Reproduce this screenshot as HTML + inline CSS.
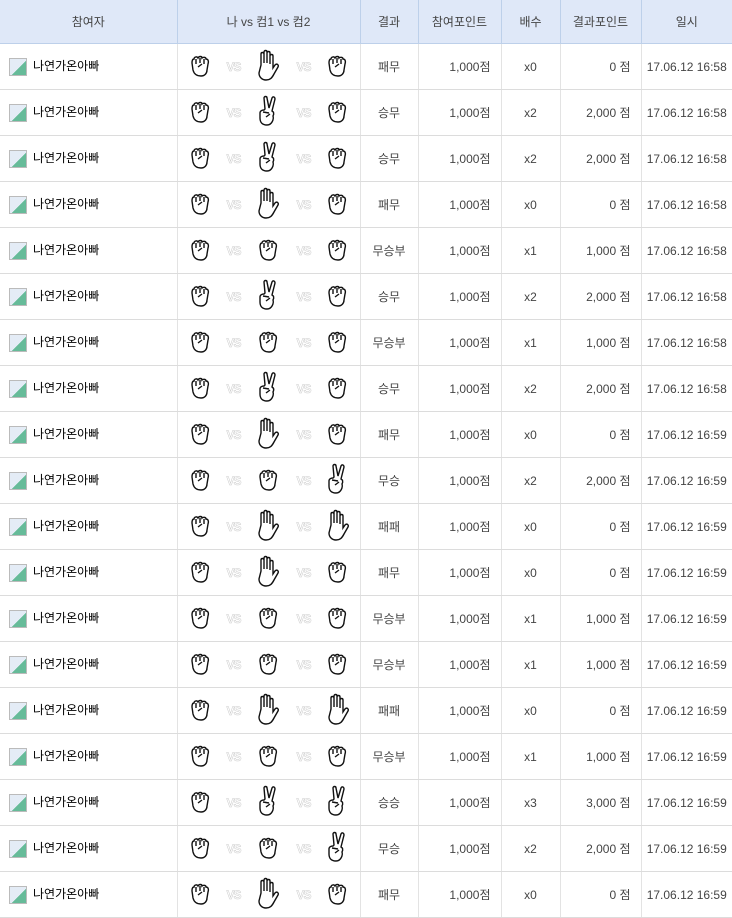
<!DOCTYPE html>
<html><head><meta charset="utf-8"><style>
body{margin:0;width:732px;height:918px;overflow:hidden;background:#fff;font-family:"Liberation Sans","Noto Sans CJK KR","NanumGothic",sans-serif;font-size:12px;color:#444}
table{border-collapse:collapse;table-layout:fixed;width:732px}
td,th{padding:0;text-align:center;border-right:1px solid #e3e3e3;border-bottom:1px solid #dcdcdc}
th{background:#dfe8f8;height:43px;font-weight:normal;color:#444;border-right:1px solid #bdd0ea;border-bottom:1px solid #bdd0ea}
td{height:45px}
td.n{text-align:left;padding-left:9px;color:#000}
td.r{text-align:right;padding-right:10px}
.img{display:inline-block;width:18px;height:18px;border:1px solid #bbb;vertical-align:middle;margin-right:6px;background:linear-gradient(135deg,#e4ecf6 55%,#6b9 55%);box-sizing:border-box}
.h{display:inline-flex;align-items:center;justify-content:space-between;width:160px;vertical-align:middle}
.vs{font-weight:bold;font-size:12px;-webkit-text-stroke:0.5px #ccc;color:#fff;letter-spacing:-1px}
</style></head><body>
<table>
<colgroup><col style="width:177px"><col style="width:183px"><col style="width:58px"><col style="width:83px"><col style="width:59px"><col style="width:81px"><col style="width:91px"></colgroup>
<thead><tr><th>참여자</th><th>나 vs 컴1 vs 컴2</th><th>결과</th><th>참여포인트</th><th>배수</th><th>결과포인트</th><th style="border-right:0">일시</th></tr></thead>
<tbody id="b"></tbody></table>
<script>
var R='<svg width="22" height="26" viewBox="0 0 22 26"><path d="M5 7c0-2 3-3 4-1 1-2 4-2 4 0 1-1 4-1 4 1 2 0 3 2 2 5l-1 6c0 3-2 6-6 6s-7-2-8-6L3 11c0-3 1-4 2-4zM7 7l0 5M11 6v5M15 7v5M9 15l4-3" fill="none" stroke="#111" stroke-width="1.4"/></svg>';
var P='<svg width="24" height="32" viewBox="0 0 24 32"><path d="M5 16V5c0-2 3-2 3 0v9V3c0-2 3-2 3 0v11V4c0-2 3-2 3 0v11V7c0-2 3-2 3 0v12l2-3c2-2 4 0 3 2l-4 7c-2 4-4 6-8 6s-7-3-7-7z" fill="none" stroke="#111" stroke-width="1.4"/></svg>';
var S='<svg width="22" height="32" viewBox="0 0 22 32"><path d="M8 14L7 3c0-2 3-2 3 0l2 10 3-10c1-2 3-1 3 1l-3 12c2 1 2 3 1 5 1 3-1 9-6 9s-7-3-7-7l0-5c0-2 2-3 4-3zM6 17l6 1M9 22l4-3" fill="none" stroke="#111" stroke-width="1.4"/></svg>';
var m={R:R,P:P,S:S};
var d=[["RPR","패무",0,58],["RSR","승무",2,58],["RSR","승무",2,58],["RPR","패무",0,58],["RRR","무승부",1,58],["RSR","승무",2,58],["RRR","무승부",1,58],["RSR","승무",2,58],["RPR","패무",0,59],["RRS","무승",2,59],["RPP","패패",0,59],["RPR","패무",0,59],["RRR","무승부",1,59],["RRR","무승부",1,59],["RPP","패패",0,59],["RRR","무승부",1,59],["RSS","승승",3,59],["RRS","무승",2,59],["RPR","패무",0,59]];
var h='';d.forEach(function(r){var p=r[2]?r[2]+",000":"0";
h+='<tr><td class="n"><span class="img"></span>나연가온아빠</td><td><span class="h"><span style="width:22px">'+m[r[0][0]]+'</span><span class="vs">VS</span><span style="width:24px">'+m[r[0][1]]+'</span><span class="vs">VS</span><span style="width:22px">'+m[r[0][2]]+'</span></span></td><td>'+r[1]+'</td><td class="r">1,000점</td><td>x'+r[2]+'</td><td class="r">'+p+' 점</td><td style="border-right:0">17.06.12 16:'+r[3]+'</td></tr>';});
document.getElementById('b').innerHTML=h;
</script>
</body></html>
